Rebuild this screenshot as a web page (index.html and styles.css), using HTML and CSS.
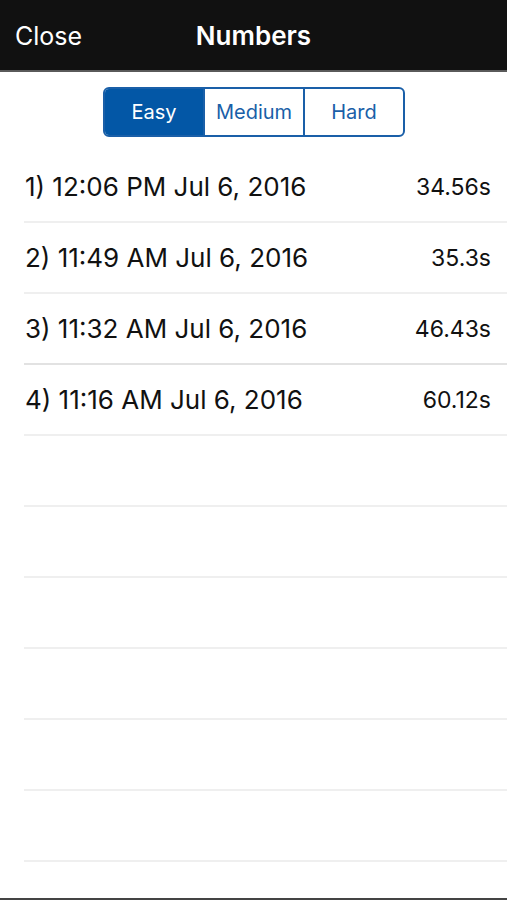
FILE: index.html
```html
<!DOCTYPE html>
<html>
<head>
<meta charset="utf-8">
<link rel="stylesheet" href="styles.css">
</head>
<body>
<div class="app">
  <header class="navbar">
    <span class="nav-left">Close</span>
    <span class="nav-title">Numbers</span>
  </header>
  <div class="seg-wrap">
    <div class="segmented">
      <div class="seg active">Easy</div>
      <div class="seg">Medium</div>
      <div class="seg">Hard</div>
    </div>
  </div>
  <ul class="list">
    <li class="row"><span class="label">1) 12:06 PM Jul 6, 2016</span><span class="value">34.56s</span></li>
    <li class="row"><span class="label">2) 11:49 AM Jul 6, 2016</span><span class="value">35.3s</span></li>
    <li class="row"><span class="label">3) 11:32 AM Jul 6, 2016</span><span class="value">46.43s</span></li>
    <li class="row"><span class="label">4) 11:16 AM Jul 6, 2016</span><span class="value">60.12s</span></li>
    <li class="row"></li>
    <li class="row"></li>
    <li class="row"></li>
    <li class="row"></li>
    <li class="row"></li>
    <li class="row"></li>
  </ul>
</div>
</body>
</html>
```
FILE: styles.css
```css
html, body {
  margin: 0;
  padding: 0;
  background: #fff;
}
.app {
  width: 507px;
  height: 900px;
  box-sizing: border-box;
  border-bottom: 2px solid #444;
  font-family: "Inter", "Roboto", "Liberation Sans", sans-serif;
  overflow: hidden;
}
.navbar {
  height: 70px;
  background: #111;
  border-bottom: 2px solid #5a5a5a;
  position: relative;
  display: flex;
  align-items: center;
}
.nav-left {
  color: #fff;
  font-size: 25px;
  margin-left: 15px;
  margin-top: 2px;
}
.nav-title {
  position: absolute;
  left: 0;
  right: 0;
  text-align: center;
  color: #fff;
  font-size: 26px;
  font-weight: 600;
  top: 20px;
  pointer-events: none;
}
.seg-wrap {
  display: flex;
  justify-content: center;
  padding-top: 15px;
  height: 80px;
  box-sizing: border-box;
  padding-left: 1px;
}
.segmented {
  display: flex;
  width: 302px;
  height: 50px;
  box-sizing: border-box;
  border: 2px solid #1a5fa8;
  border-radius: 6px;
  overflow: hidden;
}
.seg {
  flex: 1;
  display: flex;
  align-items: center;
  justify-content: center;
  font-size: 20px;
  color: #1a5fa8;
  border-left: 2px solid #1a5fa8;
}
.seg:first-child {
  border-left: none;
}
.seg.active {
  background: #0357a6;
  color: #fff;
}
.list {
  list-style: none;
  margin: 0;
  padding: 0 0 0 24px;
}
.row {
  height: 71px;
  box-sizing: border-box;
  border-bottom: 2px solid #efefef;
  display: flex;
  align-items: center;
  justify-content: space-between;
  padding: 0 16px 0 1px;
  color: #111;
}
.row:nth-child(3) {
  border-bottom-color: #e2e2e2;
}
.label {
  font-size: 26px;
}
.value {
  font-size: 23px;
}
```
